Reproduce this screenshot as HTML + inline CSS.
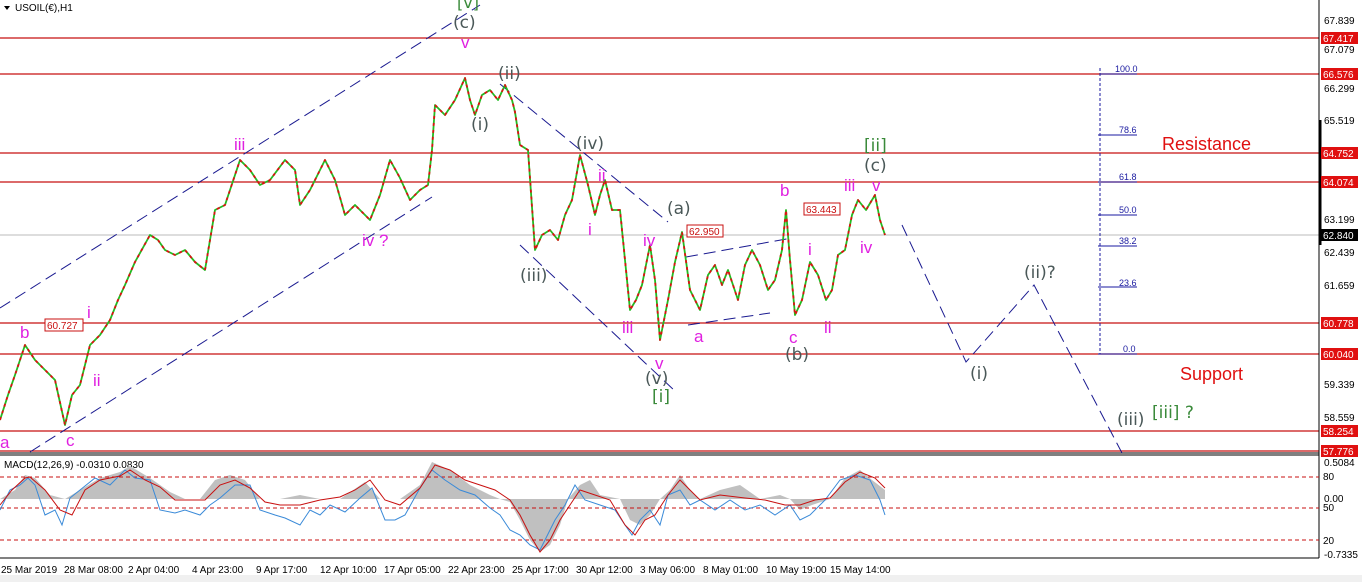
<!DOCTYPE html>
<html><head><meta charset="utf-8"><style>
html,body{margin:0;padding:0;background:#fff;}
svg{display:block;font-family:"Liberation Sans",sans-serif;}
.ax{font-size:10px;fill:#000;}
.mg{fill:#e020e0;font-size:17px;}
.gy{fill:#4a5858;font-size:17px;font-family:"DejaVu Sans",sans-serif;}
.gr{fill:#3a8a3a;font-size:17px;font-family:"DejaVu Sans",sans-serif;}
.fb{fill:#1a1aa0;font-size:9px;}
.rl{fill:#fff;font-size:10px;}
</style></head><body>
<svg width="1362" height="582" viewBox="0 0 1362 582">
<rect width="1362" height="582" fill="#fff"/>
<rect x="0" y="575" width="1362" height="7" fill="#f0f0f0"/>
<g stroke="#c81010" stroke-width="1.2">
<line x1="0" y1="38" x2="1319" y2="38"/>
<line x1="0" y1="74" x2="1319" y2="74"/>
<line x1="0" y1="153" x2="1319" y2="153"/>
<line x1="0" y1="182" x2="1319" y2="182"/>
<line x1="0" y1="323" x2="1319" y2="323"/>
<line x1="0" y1="354" x2="1319" y2="354"/>
<line x1="0" y1="431" x2="1319" y2="431"/>
<line x1="0" y1="451" x2="1319" y2="451"/>
</g>
<line x1="0" y1="235" x2="1319" y2="235" stroke="#bbb"/>
<line x1="0" y1="453" x2="1319" y2="453" stroke="#000"/>
<line x1="0" y1="455" x2="1319" y2="455" stroke="#000"/>
<g stroke="#1a1a90" stroke-width="1" stroke-dasharray="12,6" fill="none">
<line x1="0" y1="308" x2="480" y2="5"/>
<line x1="30" y1="452" x2="432" y2="197"/>
<line x1="500" y1="84" x2="668" y2="222"/>
<line x1="520" y1="245" x2="676" y2="392"/>
<line x1="686" y1="257" x2="792" y2="238"/>
<line x1="688" y1="325" x2="770" y2="313"/>
<polyline points="902,225 966,362 1034,285 1122,453"/>
</g>
<g stroke="#1a1aa0" stroke-width="1">
<line x1="1100" y1="68" x2="1100" y2="354" stroke-dasharray="3,2"/>
<line x1="1100" y1="74" x2="1137" y2="74"/>
<line x1="1098" y1="135" x2="1137" y2="135"/>
<line x1="1098" y1="182" x2="1137" y2="182"/>
<line x1="1098" y1="215" x2="1137" y2="215"/>
<line x1="1098" y1="246" x2="1137" y2="246"/>
<line x1="1098" y1="287" x2="1137" y2="287"/>
<line x1="1098" y1="354" x2="1137" y2="354"/>
</g>
<text class="fb" x="1115" y="72">100.0</text>
<text class="fb" x="1119" y="133">78.6</text>
<text class="fb" x="1119" y="180">61.8</text>
<text class="fb" x="1119" y="213">50.0</text>
<text class="fb" x="1119" y="244">38.2</text>
<text class="fb" x="1119" y="286">23.6</text>
<text class="fb" x="1123" y="352">0.0</text>
<g fill="none" stroke-width="1.8" stroke-linejoin="round">
<polyline stroke="#22bb22" points="0,420 8,395 15,375 25,345 35,360 45,370 55,380 65,425 72,395 80,385 90,345 100,335 110,320 118,300 125,285 135,262 150,235 158,240 165,250 175,255 185,250 195,262 205,270 210,240 215,210 225,205 235,175 240,160 250,170 260,185 270,180 285,160 295,170 300,205 310,190 325,160 335,180 345,215 355,205 370,220 380,195 390,160 400,178 410,200 420,190 428,185 432,150 435,105 445,115 455,100 465,78 470,100 475,115 482,95 490,90 498,100 505,85 512,100 515,112 520,145 528,150 535,250 542,235 550,230 558,240 565,215 572,200 580,155 588,185 595,215 600,195 605,180 612,210 620,210 630,310 636,300 642,285 650,245 655,280 660,340 664,320 668,300 675,262 682,232 690,290 695,300 700,310 708,275 715,265 722,285 728,270 738,300 745,265 752,250 760,265 768,290 775,280 782,250 786,210 790,260 795,315 802,300 810,262 818,275 826,300 832,290 838,255 845,250 852,215 858,200 866,210 875,195 880,220 885,235"/>
<polyline stroke="#dd1111" stroke-dasharray="3,4" points="0,420 8,395 15,375 25,345 35,360 45,370 55,380 65,425 72,395 80,385 90,345 100,335 110,320 118,300 125,285 135,262 150,235 158,240 165,250 175,255 185,250 195,262 205,270 210,240 215,210 225,205 235,175 240,160 250,170 260,185 270,180 285,160 295,170 300,205 310,190 325,160 335,180 345,215 355,205 370,220 380,195 390,160 400,178 410,200 420,190 428,185 432,150 435,105 445,115 455,100 465,78 470,100 475,115 482,95 490,90 498,100 505,85 512,100 515,112 520,145 528,150 535,250 542,235 550,230 558,240 565,215 572,200 580,155 588,185 595,215 600,195 605,180 612,210 620,210 630,310 636,300 642,285 650,245 655,280 660,340 664,320 668,300 675,262 682,232 690,290 695,300 700,310 708,275 715,265 722,285 728,270 738,300 745,265 752,250 760,265 768,290 775,280 782,250 786,210 790,260 795,315 802,300 810,262 818,275 826,300 832,290 838,255 845,250 852,215 858,200 866,210 875,195 880,220 885,235"/>
</g>
<g stroke="#c81010" fill="#fff">
<rect x="45" y="319" width="38" height="12"/><rect x="687" y="225" width="36" height="12"/><rect x="804" y="203" width="36" height="12"/>
</g>
<g fill="#c81010" font-size="10px"><text x="47" y="329">60.727</text><text x="689" y="235">62.950</text><text x="806" y="213">63.443</text></g>
<text class="mg" x="20" y="338">b</text><text class="mg" x="87" y="318">i</text><text class="mg" x="93" y="386">ii</text>
<text class="mg" x="66" y="446">c</text><text class="mg" x="0" y="448">a</text>
<text class="mg" x="234" y="150">iii</text><text class="mg" x="362" y="246">iv ?</text>
<text class="mg" x="461" y="48">v</text><text class="gy" x="453" y="28">(c)</text>
<text class="gr" x="457" y="8" style="font-size:16px">[v]</text>
<text class="gy" x="471" y="130">(i)</text><text class="gy" x="498" y="79">(ii)</text>
<text class="gy" x="520" y="281">(iii)</text><text class="gy" x="576" y="149">(iv)</text>
<text class="mg" x="598" y="181">ii</text><text class="mg" x="588" y="235">i</text>
<text class="mg" x="643" y="246">iv</text><text class="mg" x="622" y="333">iii</text>
<text class="mg" x="655" y="369">v</text><text class="gy" x="645" y="384">(v)</text>
<text class="gr" x="652" y="402">[i]</text>
<text class="gy" x="667" y="214">(a)</text>
<text class="mg" x="694" y="342">a</text><text class="mg" x="780" y="196">b</text>
<text class="mg" x="789" y="343">c</text><text class="gy" x="785" y="360">(b)</text>
<text class="mg" x="808" y="255">i</text><text class="mg" x="824" y="333">ii</text>
<text class="mg" x="844" y="191">iii</text><text class="mg" x="872" y="191">v</text>
<text class="mg" x="860" y="253">iv</text>
<text class="gy" x="864" y="171">(c)</text><text class="gr" x="864" y="151">[ii]</text>
<text class="gy" x="970" y="379">(i)</text><text class="gy" x="1024" y="278">(ii)?</text>
<text class="gy" x="1117" y="425">(iii)</text><text class="gr" x="1152" y="418">[iii] ?</text>
<text x="1162" y="150" fill="#e01010" font-size="18px">Resistance</text>
<text x="1180" y="380" fill="#e01010" font-size="18px">Support</text>
<path d="M4,6 L10,6 L7,10Z" fill="#000"/>
<text x="15" y="11" font-size="10px">USOIL(€),H1</text>
<line x1="1319" y1="0" x2="1319" y2="558" stroke="#000"/>
<line x1="1320" y1="120" x2="1320" y2="245" stroke="#000" stroke-width="3"/>
<g class="ax">
<text x="1324" y="24">67.839</text><text x="1324" y="53">67.079</text><text x="1324" y="92">66.299</text>
<text x="1324" y="124">65.519</text><text x="1324" y="223">63.199</text><text x="1324" y="256">62.439</text>
<text x="1324" y="289">61.659</text><text x="1324" y="388">59.339</text><text x="1324" y="421">58.559</text>
<text x="1324" y="466">0.5084</text><text x="1323" y="480">80</text><text x="1324" y="502">0.00</text>
<text x="1323" y="511">50</text><text x="1323" y="544">20</text><text x="1324" y="558">-0.7335</text>
</g>
<g fill="#e01010">
<rect x="1321" y="32" width="37" height="12"/><rect x="1321" y="68" width="37" height="12"/>
<rect x="1321" y="147" width="37" height="12"/><rect x="1321" y="176" width="37" height="12"/>
<rect x="1321" y="317" width="37" height="12"/><rect x="1321" y="348" width="37" height="12"/>
<rect x="1321" y="425" width="37" height="12"/><rect x="1321" y="445" width="37" height="12"/>
</g>
<rect x="1321" y="229" width="37" height="12" fill="#000"/>
<g class="rl"><text x="1323" y="42">67.417</text><text x="1323" y="78">66.576</text><text x="1323" y="157">64.752</text>
<text x="1323" y="186">64.074</text><text x="1323" y="239">62.840</text><text x="1323" y="327">60.778</text>
<text x="1323" y="358">60.040</text><text x="1323" y="435">58.254</text><text x="1323" y="455">57.776</text></g>
<text x="4" y="468" font-size="10px">MACD(12,26,9) -0.0310 0.0830</text>
<polygon fill="#c0c0c0" points="0,499 15,490 25,475 35,478 50,495 65,499 80,490 100,478 120,472 130,466 150,478 170,492 185,499 200,499 215,480 230,475 245,480 260,499 280,499 300,495 320,499 340,499 365,482 380,499 400,499 420,485 432,462 450,470 470,485 490,495 500,499 510,502 520,520 530,540 540,552 550,545 560,525 568,499 580,485 590,480 600,495 620,499 630,520 640,525 650,515 660,499 670,490 680,475 690,490 700,499 720,490 740,485 760,499 780,495 790,499 800,510 812,505 830,499 845,478 860,470 872,480 885,490 885,499 0,499"/>
<g stroke="#c81010" stroke-dasharray="4,3"><line x1="0" y1="477" x2="1319" y2="477"/><line x1="0" y1="508" x2="1319" y2="508"/><line x1="0" y1="540" x2="1319" y2="540"/></g>
<polyline fill="none" stroke="#3a8ad8" stroke-width="1" points="0,510 10,490 20,485 28,478 35,485 45,515 55,510 62,525 70,498 80,490 95,478 110,485 125,470 135,478 150,480 160,510 175,513 185,510 200,515 210,505 220,498 235,485 250,485 260,510 275,515 285,518 300,525 310,510 320,515 330,505 345,512 360,498 372,488 385,520 395,520 405,515 420,488 432,470 445,480 460,490 475,495 490,508 500,515 510,530 520,535 530,545 540,550 545,540 555,520 565,505 575,485 585,500 600,505 615,510 625,525 632,535 640,520 650,510 660,525 668,495 680,490 690,505 700,500 715,510 730,500 745,510 760,505 775,515 790,505 800,520 810,515 825,500 840,480 855,475 870,480 880,500 885,515"/>
<polyline fill="none" stroke="#c81010" stroke-width="1" points="0,505 12,490 25,478 30,477 45,490 60,510 72,515 85,490 100,480 120,476 130,470 145,480 160,487 175,500 190,500 205,500 220,485 235,480 250,488 265,502 280,505 300,505 320,500 340,497 355,490 370,480 385,500 400,505 420,488 435,465 450,470 465,480 480,485 495,490 510,500 520,515 530,535 540,552 550,540 560,520 570,505 580,490 595,495 610,500 625,525 635,535 645,520 655,515 668,495 680,480 690,490 700,500 720,495 745,498 765,500 785,505 800,505 815,500 830,498 845,482 860,472 875,478 885,488"/>
<line x1="0" y1="558" x2="1319" y2="558" stroke="#000"/>
<g class="ax">
<text x="1" y="573">25 Mar 2019</text><text x="64" y="573">28 Mar 08:00</text><text x="128" y="573">2 Apr 04:00</text>
<text x="192" y="573">4 Apr 23:00</text><text x="256" y="573">9 Apr 17:00</text><text x="320" y="573">12 Apr 10:00</text>
<text x="384" y="573">17 Apr 05:00</text><text x="448" y="573">22 Apr 23:00</text><text x="512" y="573">25 Apr 17:00</text>
<text x="576" y="573">30 Apr 12:00</text><text x="640" y="573">3 May 06:00</text><text x="703" y="573">8 May 01:00</text>
<text x="766" y="573">10 May 19:00</text><text x="830" y="573">15 May 14:00</text>
</g>
</svg>
</body></html>
